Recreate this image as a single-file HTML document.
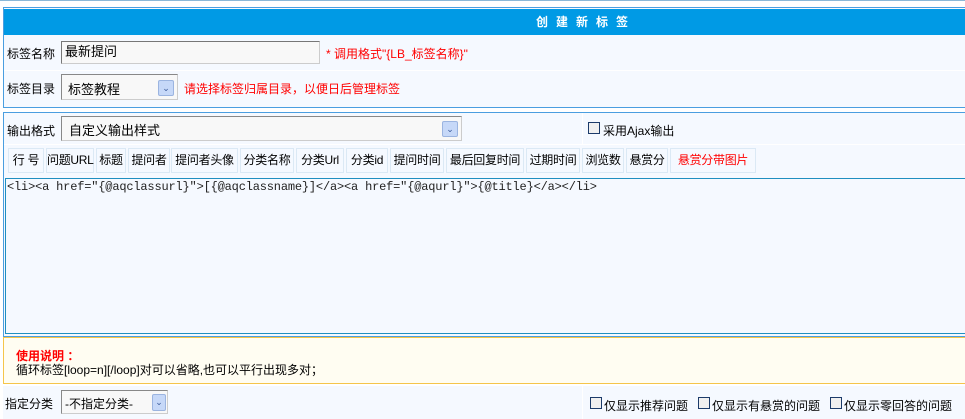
<!DOCTYPE html>
<html><head><meta charset="utf-8"><style>
*{margin:0;padding:0;box-sizing:border-box}
body{width:965px;height:419px;background:#fff;position:relative;overflow:hidden;font:12px "Liberation Sans","Noto Sans CJK SC",sans-serif;color:#000}
.a{position:absolute;white-space:nowrap}
.sel{position:absolute;background:#f8f8f8;border:1px solid #888;border-right-color:#ccc;border-bottom-color:#ccc}
.arr{position:absolute;width:16px;height:16px;background:#c6d8f8;border:1px solid #9bb4e0;border-radius:2px;color:#3a5a9a;font-size:9px;text-align:center;line-height:14px}
.cb{position:absolute;width:12px;height:12px;border:1px solid #1c3b6a;background:#f0f0f0}
.btn{position:absolute;top:148px;height:25px;border:1px solid #dbe9f5;background:#f5f9ff;text-align:center;line-height:23px;white-space:nowrap;letter-spacing:-0.3px}
</style></head><body>
<div class="a" style="left:0;top:0;width:965px;height:1px;background:#8ab8d8"></div>
<div class="a" style="left:3px;top:7px;width:970px;height:101px;border:1px solid #4a9ee0;background:#f5f9ff"></div>
<div class="a" style="left:4px;top:9px;width:970px;height:26px;background:#009ae5"></div>
<div class="a" style="left:536px;top:13px;color:#fff;font-weight:bold;letter-spacing:8px">创建新标签</div>
<div class="a" style="left:4px;top:70px;width:970px;height:1px;background:#fff"></div>
<div class="a" style="left:7px;top:45px">标签名称</div>
<div class="a" style="left:61px;top:41px;width:259px;height:23px;border:1px solid #777;border-right-color:#ccc;border-bottom-color:#ccc;background:#f8f8f8;padding:2px 3px;font-size:13px;line-height:16px">最新提问</div>
<div class="a" style="left:326px;top:45px;color:#f00">* 调用格式"{LB_标签名称}"</div>
<div class="a" style="left:7px;top:80px">标签目录</div>
<div class="sel" style="left:61px;top:74px;width:117px;height:26px"><span class="a" style="left:6px;top:4px;font-size:13px">标签教程</span><div class="arr" style="left:96px;top:5px">&#8964;</div></div>
<div class="a" style="left:184px;top:80px;color:#f00">请选择标签归属目录，以便日后管理标签</div>

<div class="a" style="left:3px;top:112px;width:970px;height:225px;border:1px solid #4a9ee0;background:#f5f9ff"></div>
<div class="a" style="left:4px;top:144px;width:970px;height:1px;background:#fff"></div>
<div class="a" style="left:582px;top:113px;width:1px;height:31px;background:#fff"></div>
<div class="a" style="left:7px;top:122px">输出格式</div>
<div class="sel" style="left:61px;top:116px;width:401px;height:25px"><span class="a" style="left:7px;top:3px;font-size:13px">自定义输出样式</span><div class="arr" style="left:380px;top:4px">&#8964;</div></div>
<div class="cb" style="left:588px;top:122px"></div>
<div class="a" style="left:603px;top:122px">采用Ajax输出</div>
<div class="btn" style="left:8px;width:36px">行 号</div>
<div class="btn" style="left:46px;width:48px">问题URL</div>
<div class="btn" style="left:96px;width:30px">标题</div>
<div class="btn" style="left:128px;width:42px">提问者</div>
<div class="btn" style="left:171px;width:67px">提问者头像</div>
<div class="btn" style="left:240px;width:54px">分类名称</div>
<div class="btn" style="left:296px;width:48px">分类Url</div>
<div class="btn" style="left:346px;width:42px">分类id</div>
<div class="btn" style="left:390px;width:54px">提问时间</div>
<div class="btn" style="left:446px;width:78px">最后回复时间</div>
<div class="btn" style="left:526px;width:54px">过期时间</div>
<div class="btn" style="left:582px;width:42px">浏览数</div>
<div class="btn" style="left:626px;width:42px">悬赏分</div>
<div class="btn" style="left:670px;width:86px;color:#f00">悬赏分带图片</div>
<div class="a" style="left:5px;top:178px;width:970px;height:156px;border:1px solid #1f8fc0;background:#f5f9ff"></div>
<div class="a" style="left:7px;top:180px;font-family:'Liberation Mono','Noto Sans CJK SC',monospace;font-size:12px;letter-spacing:-0.18px;color:#222">&lt;li&gt;&lt;a href="{@aqclassurl}"&gt;[{@aqclassname}]&lt;/a&gt;&lt;a href="{@aqurl}"&gt;{@title}&lt;/a&gt;&lt;/li&gt;</div>

<div class="a" style="left:3px;top:337px;width:970px;height:47px;border:1px solid #f5c54a;background:#fffdf2"></div>
<div class="a" style="left:16px;top:347px;color:#f00;font-weight:bold">使用说明 ：</div>
<div class="a" style="left:16px;top:361px">循环标签[loop=n][/loop]对可以省略,也可以平行出现多对；</div>

<div class="a" style="left:3px;top:386px;width:970px;height:33px;background:#f5f9ff"></div>
<div class="a" style="left:582px;top:386px;width:1px;height:33px;background:#fff"></div>
<div class="a" style="left:5px;top:395px">指定分类</div>
<div class="sel" style="left:61px;top:390px;width:107px;height:24px"><span class="a" style="left:3px;top:4px">-不指定分类-</span><div class="arr" style="left:90px;top:3px;width:14px;height:17px">&#8964;</div></div>
<div class="cb" style="left:590px;top:397px"></div><div class="a" style="left:604px;top:397px">仅显示推荐问题</div>
<div class="cb" style="left:698px;top:397px"></div><div class="a" style="left:712px;top:397px">仅显示有悬赏的问题</div>
<div class="cb" style="left:830px;top:397px"></div><div class="a" style="left:844px;top:397px">仅显示零回答的问题</div>
</body></html>
